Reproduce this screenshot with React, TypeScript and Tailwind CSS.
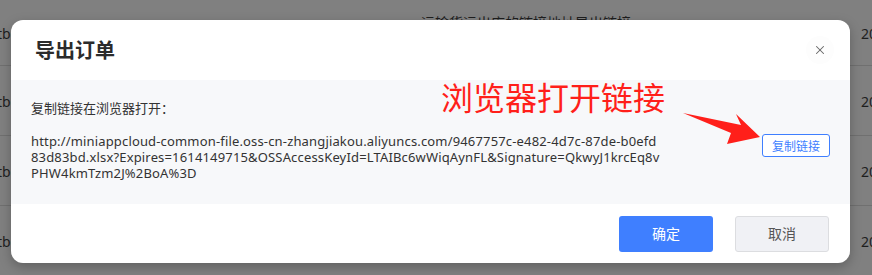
import { X } from 'lucide-react'

const rows = [0, 1, 2, 3]

function Backdrop() {
  return (
    <div className="absolute inset-0 bg-[#808080]">
      {rows.map((i) => (
        <div key={i} className="relative h-[70px] border-b border-[#707070] first:h-[66px]">
          <span className="absolute left-[-3px] top-1/2 -translate-y-1/2 text-[14px] text-[#1e1e1e]">tbc</span>
          <span className="absolute left-[861px] top-1/2 -translate-y-1/2 text-[14px] text-[#1e1e1e]">2021</span>
        </div>
      ))}
      <span className="absolute left-[421px] top-[12px] text-[14px] text-[#1e1e1e]">运输货运出库的链接地址导出链接</span>
    </div>
  )
}

function Arrow() {
  return (
    <svg className="absolute left-[680px] top-[110px]" width="84" height="38" viewBox="680 110 84 38">
      <polygon points="683,113 741,125 736,114 760,137 727,144 731,133" fill="#ff1f1a" />
    </svg>
  )
}

export default function App() {
  return (
    <div className="relative h-[275px] w-[872px] overflow-hidden font-['Noto_Sans','Noto_Sans_CJK_SC',sans-serif]">
      <Backdrop />
      <div className="absolute left-[11px] top-[20px] w-[839px] overflow-hidden rounded-[12px] bg-white shadow-[0_4px_12px_rgba(0,0,0,0.25)]">
        <div className="flex h-[60px] items-center justify-between pl-[24px] pr-[16px]">
          <h2 className="text-[20px] font-bold text-[#2b2b2b] font-['Noto_Sans_CJK_SC',sans-serif]">导出订单</h2>
          <button className="flex h-[28px] w-[28px] items-center justify-center rounded-full bg-[#fdfdfd] text-[#666]">
            <X size={14} strokeWidth={1.8} />
          </button>
        </div>
        <div className="h-[124px] bg-[#f7f8fa] px-[20px] pt-[18px] text-[13px] text-[#333]">
          <p className="leading-[20px] font-['Noto_Sans_CJK_SC',sans-serif]">复制链接在浏览器打开：</p>
          <div className="mt-[15px] flex items-start justify-between">
            <p className="leading-[16px] tracking-[0.16px]">
              http://miniappcloud-common-file.oss-cn-zhangjiakou.aliyuncs.com/9467757c-e482-4d7c-87de-b0efd
              <br />
              83d83bd.xlsx?Expires=1614149715&amp;OSSAccessKeyId=LTAIBc6wWiqAynFL&amp;Signature=QkwyJ1krcEq8v
              <br />
              PHW4kmTzm2J%2BoA%3D
            </p>
            <button className="mt-[1px] h-[23px] w-[68px] shrink-0 rounded-[3px] border border-[#3f7fff] bg-white text-[12px] text-[#3f7fff] font-['Noto_Sans_CJK_SC',sans-serif]">
              复制链接
            </button>
          </div>
        </div>
        <div className="flex h-[59px] items-center justify-end gap-[22px] pr-[21px] font-['Noto_Sans_CJK_SC',sans-serif]">
          <button className="h-[36px] w-[94px] rounded-[3px] bg-[#3f7fff] text-[14px] text-white">确定</button>
          <button className="h-[36px] w-[94px] rounded-[3px] border border-[#dcdde0] bg-[#f0f1f5] text-[14px] text-[#555]">取消</button>
        </div>
      </div>
      <span className="absolute left-[441px] top-[74px] text-[32px] leading-[44px] text-[#ff1f1a] font-['Noto_Sans_CJK_SC',sans-serif]">浏览器打开链接</span>
      <Arrow />
    </div>
  )
}
